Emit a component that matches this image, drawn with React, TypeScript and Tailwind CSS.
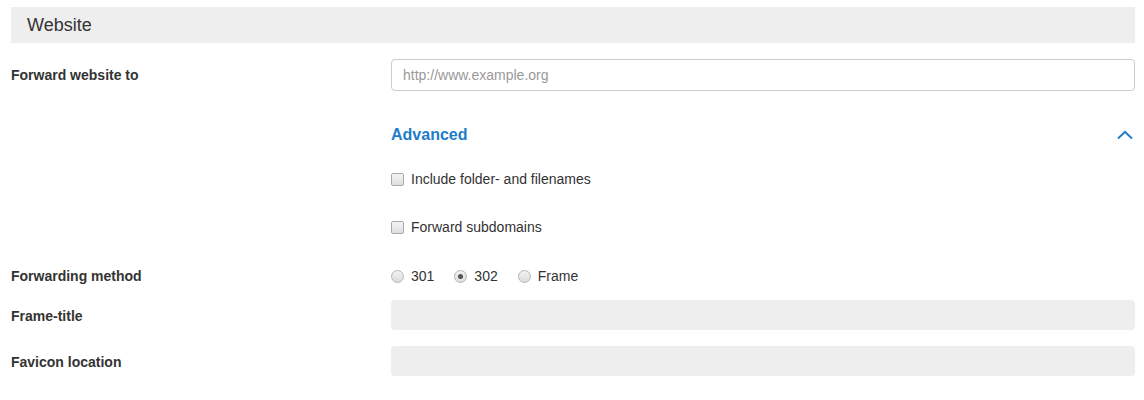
import React, { useState } from 'react';

const font = { fontFamily: '"Liberation Sans", Arial, sans-serif' };

const FieldLabel: React.FC<{ children: React.ReactNode; className?: string }> = ({ children, className = '' }) => (
  <div className={`w-[380px] shrink-0 text-[14px] font-bold text-[#333] ${className}`}>{children}</div>
);

const Checkbox: React.FC<{ label: string; checked: boolean; onChange: () => void }> = ({ label, checked, onChange }) => (
  <label className="flex items-center cursor-pointer" onClick={onChange}>
    <span className="w-[13px] h-[13px] rounded-[2px] border border-[#a9a9a9] bg-gradient-to-b from-[#f4f4f4] to-[#dedede] flex items-center justify-center">
      {checked && <span className="w-[7px] h-[7px] bg-[#555]" />}
    </span>
    <span className="ml-[7px] text-[14px] text-[#333]">{label}</span>
  </label>
);

const Radio: React.FC<{ label: string; checked: boolean; onSelect: () => void }> = ({ label, checked, onSelect }) => (
  <label className="flex items-center cursor-pointer" onClick={onSelect}>
    <span className="w-[13px] h-[13px] rounded-full border border-[#b5b5b5] bg-gradient-to-b from-[#f2f2f2] to-[#dcdcdc] flex items-center justify-center">
      {checked && <span className="w-[5px] h-[5px] rounded-full bg-[#555]" />}
    </span>
    <span className="ml-[7px] text-[14px] text-[#333]">{label}</span>
  </label>
);

export default function App() {
  const [includePaths, setIncludePaths] = useState(false);
  const [subdomains, setSubdomains] = useState(false);
  const [method, setMethod] = useState<'301' | '302' | 'Frame'>('302');

  return (
    <div className="bg-white w-[1144px] h-[400px] pl-[11px] pr-[9px] pt-[7px]" style={font}>
      {/* Section header */}
      <div className="h-[36px] bg-[#eeeeee] flex items-center pl-[16px] text-[18px] text-[#333]">
        Website
      </div>

      {/* Target url */}
      <div className="flex items-center mt-[16px]">
        <FieldLabel>Forward website to</FieldLabel>
        <input
          type="text"
          placeholder="http://www.example.org"
          className="flex-1 h-[32px] border border-[#cccccc] rounded-[4px] px-[11px] text-[14px] text-[#333] placeholder-[#999] outline-none"
        />
      </div>

      {/* Advanced toggle */}
      <div className="flex items-center mt-[34px] h-[20px]">
        <div className="w-[380px] shrink-0" />
        <div className="flex-1 flex items-center">
          <span className="text-[16px] font-bold text-[#1e7cc8]">Advanced</span>
          <svg className="ml-auto mr-[2px]" width="16" height="10" viewBox="0 0 16 10" fill="none">
            <path d="M1 8.5 L8 1.8 L15 8.5" stroke="#1e7cc8" strokeWidth="2" />
          </svg>
        </div>
      </div>

      <div className="flex items-center mt-[24px] h-[20px]">
        <div className="w-[380px] shrink-0" />
        <Checkbox label="Include folder- and filenames" checked={includePaths} onChange={() => setIncludePaths(!includePaths)} />
      </div>

      <div className="flex items-center mt-[28px] h-[20px]">
        <div className="w-[380px] shrink-0" />
        <Checkbox label="Forward subdomains" checked={subdomains} onChange={() => setSubdomains(!subdomains)} />
      </div>

      {/* Method */}
      <div className="flex items-center mt-[29px] h-[20px]">
        <FieldLabel>Forwarding method</FieldLabel>
        <div className="flex items-center gap-[20px]">
          <Radio label="301" checked={method === '301'} onSelect={() => setMethod('301')} />
          <Radio label="302" checked={method === '302'} onSelect={() => setMethod('302')} />
          <Radio label="Frame" checked={method === 'Frame'} onSelect={() => setMethod('Frame')} />
        </div>
      </div>

      <div className="flex items-center mt-[14px]">
        <FieldLabel className="pt-[2px]">Frame-title</FieldLabel>
        <input disabled type="text" className="flex-1 h-[30px] bg-[#eeeeee] rounded-[4px] px-[11px] text-[14px] outline-none" />
      </div>

      <div className="flex items-center mt-[16px]">
        <FieldLabel className="pt-[2px]">Favicon location</FieldLabel>
        <input disabled type="text" className="flex-1 h-[30px] bg-[#eeeeee] rounded-[4px] px-[11px] text-[14px] outline-none" />
      </div>
    </div>
  );
}
